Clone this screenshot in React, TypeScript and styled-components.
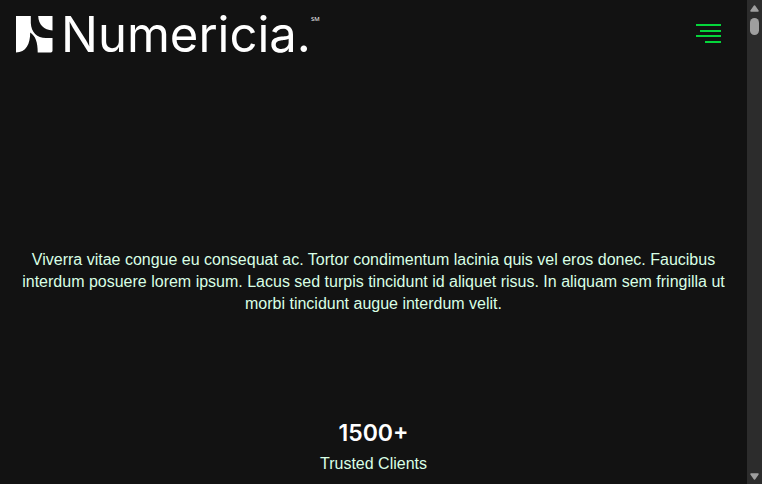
import React from "react";
import styled, { createGlobalStyle } from "styled-components";

const GlobalStyle = createGlobalStyle`
  *, *::before, *::after { box-sizing: border-box; }
  html, body { margin: 0; background: #121212; }
  body { font-family: "Liberation Sans", Arial, sans-serif; font-size: 16px; overflow: hidden; }
`;

const Window = styled.div`
  display: flex;
  height: 100vh;
  overflow: hidden;
  background: #121212;
`;

const Page = styled.div`
  flex: 1;
  min-width: 0;
  display: flex;
  flex-direction: column;
  overflow: hidden;
`;

const Header = styled.header`
  display: flex;
  align-items: center;
  justify-content: space-between;
  height: 68px;
  padding: 0 26px 0 16px;
`;

const Brand = styled.a`
  display: flex;
  align-items: center;
  color: #ffffff;
  text-decoration: none;
`;

const Mark = styled.svg`
  display: block;
  width: 37px;
  height: 37px;
`;

const Wordmark = styled.span`
  margin-left: 8px;
  padding-top: 2px;
  font-family: Inter, sans-serif;
  font-size: 49px;
  line-height: 48px;
`;

const ServiceMark = styled.sup`
  align-self: flex-start;
  font-family: "Open Sans", sans-serif;
  font-size: 6px;
  line-height: 20px;
`;

const MenuButton = styled.button`
  display: flex;
  padding: 0;
  border: 0;
  background: none;
  color: #05d53b;
  cursor: pointer;
`;

const Main = styled.main`
  display: flex;
  flex-direction: column;
  align-items: center;
  padding: 181px 16px 0;
  text-align: center;
  color: #d9ffe5;
`;

const Intro = styled.p`
  margin: 0;
  max-width: 720px;
  line-height: 22px;
`;

const Stat = styled.section`
  margin-top: 102px;
`;

const StatValue = styled.h2`
  margin: 0;
  color: #ffffff;
  font-family: Inter, sans-serif;
  font-size: 23px;
  font-weight: 600;
  line-height: 32px;
`;

const StatLabel = styled.p`
  margin: 4px 0 0;
  line-height: 22px;
`;

const Scrollbar = styled.div`
  display: flex;
  flex-direction: column;
  align-items: center;
  width: 15px;
  padding: 4px 0 3px;
  background: #2c2c2c;
`;

const Thumb = styled.div`
  width: 9px;
  height: 17px;
  margin: 6px 0 auto;
  border-radius: 5px;
  background: #9f9f9f;
`;

const Arrow = ({ down = false }: { down?: boolean }) => (
  <svg width="9" height="8" viewBox="0 0 9 8" aria-hidden="true">
    <path
      d={down ? "M1 1H8L4.5 6Z" : "M1 7H8L4.5 2Z"}
      fill="#9f9f9f"
      stroke="#9f9f9f"
      strokeWidth="1.5"
      strokeLinejoin="round"
    />
  </svg>
);

export default function App() {
  return (
    <Window>
      <GlobalStyle />
      <Page>
        <Header>
          <Brand href="#" aria-label="Numericia home">
            <Mark viewBox="0 0 37 37" fill="currentColor" aria-hidden="true">
              <path d="M0 0H14.8V7C15.2 16 21 22 30 22H36.5V34.8Q36.5 36.5 34.8 36.5H21.7C21.7 26 19.5 20 14.2 16.5C14.2 28 10 36.5 0 36.5Z" />
              <path d="M22.2 0H36.5V14.4C28 14.2 22.4 8.5 22.2 0Z" />
            </Mark>
            <Wordmark>Numericia.</Wordmark>
            <ServiceMark>SM</ServiceMark>
          </Brand>
          <MenuButton type="button" aria-label="Open menu">
            <svg width="25" height="20" viewBox="0 0 25 20" fill="currentColor" aria-hidden="true">
              <rect width="25" height="2" />
              <rect x="4" y="6" width="21" height="2" />
              <rect y="11" width="25" height="2" />
              <rect x="9" y="17" width="16" height="2" />
            </svg>
          </MenuButton>
        </Header>
        <Main>
          <Intro>
            Viverra vitae congue eu consequat ac. Tortor condimentum lacinia quis vel eros donec.
            Faucibus interdum posuere lorem ipsum. Lacus sed turpis tincidunt id aliquet risus. In
            aliquam sem fringilla ut morbi tincidunt augue interdum velit.
          </Intro>
          <Stat>
            <StatValue>1500+</StatValue>
            <StatLabel>Trusted Clients</StatLabel>
          </Stat>
        </Main>
      </Page>
      <Scrollbar aria-hidden="true">
        <Arrow />
        <Thumb />
        <Arrow down />
      </Scrollbar>
    </Window>
  );
}
